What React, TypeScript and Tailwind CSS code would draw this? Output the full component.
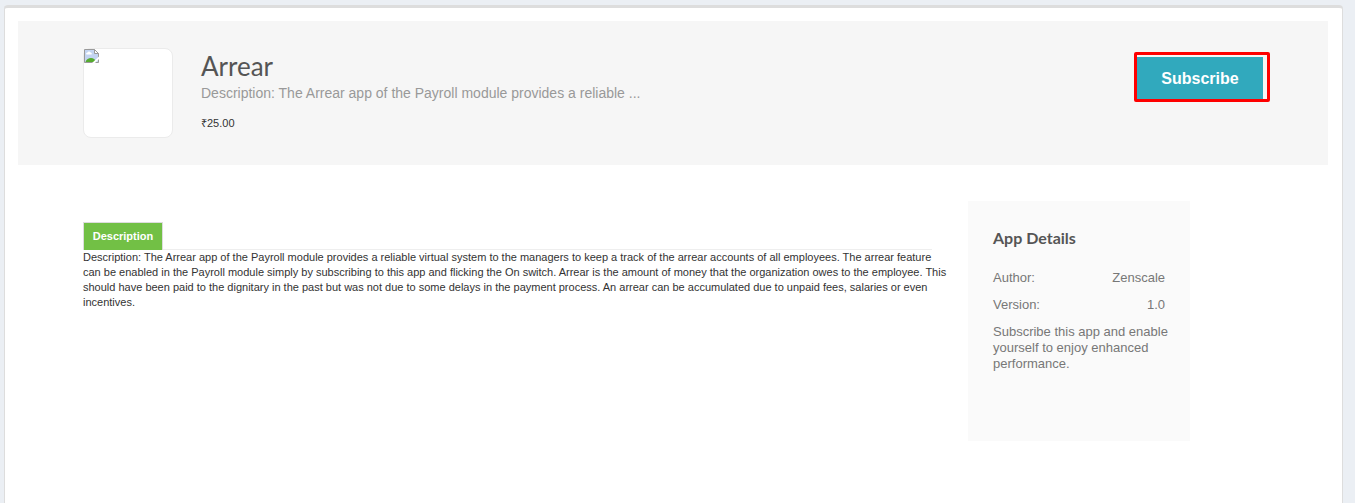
const app = {
  name: 'Arrear',
  summary: 'Description: The Arrear app of the Payroll module provides a reliable ...',
  price: '₹25.00',
  description:
    'Description: The Arrear app of the Payroll module provides a reliable virtual system to the managers to keep a track of the arrear accounts of all employees. The arrear feature can be enabled in the Payroll module simply by subscribing to this app and flicking the On switch. Arrear is the amount of money that the organization owes to the employee. This should have been paid to the dignitary in the past but was not due to some delays in the payment process. An arrear can be accumulated due to unpaid fees, salaries or even incentives.',
  details: [
    { label: 'Author:', value: 'Zenscale' },
    { label: 'Version:', value: '1.0' },
  ],
};

const MissingImage = () => (
  <svg width="16" height="16" viewBox="0 0 16 16" aria-hidden="true">
    <path d="M0.5 0.5H10.5L14.5 4.5V13.5H0.5Z" fill="#c3d4f1" stroke="#9a9a9a" />
    <path d="M2.5 5.5a1.5 1.2 0 0 1 1-2a1.6 1.6 0 0 1 3 0a1.3 1.2 0 0 1 1 2Z" fill="#fff" />
    <path d="M1.5 13c1-3 3-4 5.500-4s4 1 5 4Z" fill="#56ab2f" />
    <path d="M10.500 0.500V4.500H14.500Z" fill="#fff" stroke="#9a9a9a" />
    <path d="M7.500 14.500L15.500 7V9.500L10.500 14.500Z" fill="#fff" />
  </svg>
);

const AppHeader = () => (
  <header className="flex items-start bg-[#f6f6f6] pt-[27px] pr-[58px] pb-[27px] pl-[65px]">
    <div className="h-[90px] w-[90px] shrink-0 rounded-lg border border-[#ebebeb] bg-white">
      <MissingImage />
    </div>
    <div className="ml-7 min-w-0 flex-1">
      <h1 className="font-['Lato',sans-serif] text-[26px] leading-9 text-[#555]">{app.name}</h1>
      <p className="text-sm leading-[18px] text-[#999]">{app.summary}</p>
      <p className="mt-3 text-[11px] leading-[18px] text-[#333]">{app.price}</p>
    </div>
    <div className="mt-1 shrink-0 rounded-xs border-3 border-[#fe0000] pt-0.5 pr-1">
      <button className="block h-[42px] w-[126px] cursor-pointer bg-[#31a9bd] pt-0.5 text-base font-bold text-white hover:bg-[#2b98aa]">
        Subscribe
      </button>
    </div>
  </header>
);

const AppDetails = () => (
  <aside className="min-h-[240px] w-[222px] shrink-0 bg-[#fafafa] p-[25px] text-[13px] leading-4 text-[#777]">
    <h2 className="mb-5 font-['Lato',sans-serif] text-base font-bold text-[#555]">App Details</h2>
    <dl>
      {app.details.map((item) => (
        <div key={item.label} className="mb-[11px] flex justify-between">
          <dt>{item.label}</dt>
          <dd>{item.value}</dd>
        </div>
      ))}
    </dl>
    <p className="-mr-3">Subscribe this app and enable yourself to enjoy enhanced performance.</p>
  </aside>
);

export default function App() {
  return (
    <div className="flex min-h-screen bg-[#ebeff4] pt-[5px] pr-3 pl-1 font-['Liberation_Sans',Arial,sans-serif]">
      <main className="flex-1 rounded-t border border-t-3 border-b-0 border-[#ddd] bg-white pt-[13px] pr-3.5 pl-[13px]">
        <AppHeader />
        <div className="mt-9 flex items-start gap-9 pr-[138px] pl-[65px]">
          <section className="mt-[21px] min-w-0 flex-1 text-[11px] leading-[15px] text-[#333]">
            <div role="tablist" className="flex border-b border-[#eee]">
              <button
                role="tab"
                aria-selected="true"
                className="-mb-px h-7 w-20 border border-b-0 border-[#ddd] bg-[#72c045] font-bold text-white"
              >
                Description
              </button>
            </div>
            <p role="tabpanel" className="-mr-5">
              {app.description}
            </p>
          </section>
          <AppDetails />
        </div>
      </main>
    </div>
  );
}
